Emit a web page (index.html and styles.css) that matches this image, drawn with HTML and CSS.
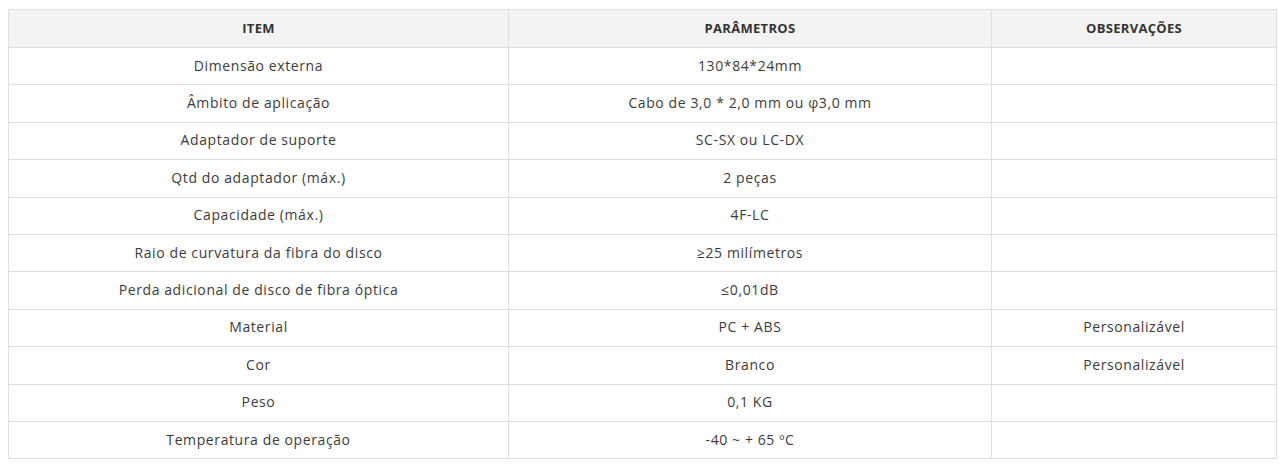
FILE: index.html
```html
<!DOCTYPE html>
<html lang="pt">
<head>
<meta charset="utf-8">
<title>Especificações</title>
<link rel="stylesheet" href="styles.css">
</head>
<body>
<div class="page">
<table class="spec">
  <colgroup>
    <col class="c1"><col class="c2"><col class="c3">
  </colgroup>
  <thead>
    <tr><th>ITEM</th><th>PARÂMETROS</th><th>OBSERVAÇÕES</th></tr>
  </thead>
  <tbody>
    <tr><td>Dimensão externa</td><td>130*84*24mm</td><td></td></tr>
    <tr><td>Âmbito de aplicação</td><td>Cabo de 3,0 * 2,0 mm ou φ3,0 mm</td><td></td></tr>
    <tr><td>Adaptador de suporte</td><td>SC-SX ou LC-DX</td><td></td></tr>
    <tr><td>Qtd do adaptador (máx.)</td><td>2 peças</td><td></td></tr>
    <tr><td>Capacidade (máx.)</td><td>4F-LC</td><td></td></tr>
    <tr><td>Raio de curvatura da fibra do disco</td><td>≥25 milímetros</td><td></td></tr>
    <tr><td>Perda adicional de disco de fibra óptica</td><td>≤0,01dB</td><td></td></tr>
    <tr><td>Material</td><td>PC + ABS</td><td>Personalizável</td></tr>
    <tr><td>Cor</td><td>Branco</td><td>Personalizável</td></tr>
    <tr><td>Peso</td><td>0,1 KG</td><td></td></tr>
    <tr><td>Temperatura de operação</td><td>-40 ~ + 65 ºC</td><td></td></tr>
  </tbody>
</table>
</div>
</body>
</html>
```
FILE: styles.css
```css
html, body {
  margin: 0;
  padding: 0;
  background: #fff;
}
.page {
  padding: 9px 4px 0 8px;
}
.spec {
  width: 1268px;
  border-collapse: collapse;
  table-layout: fixed;
  font-family: "Open Sans", "Liberation Sans", sans-serif;
  font-size: 14px;
  letter-spacing: 0.6px;
  color: #3c3c3c;
}
.c1 { width: 500px; }
.c2 { width: 483px; }
.c3 { width: 285px; }
.spec th, .spec td {
  border: 1px solid #dddddd;
  text-align: center;
  padding: 0 8px 2px;
}
.spec th {
  background: #f3f3f3;
  height: 35px;
  font-size: 13px;
  font-weight: 700;
  letter-spacing: 0.3px;
  color: #333;
}
.spec td {
  height: 34.4px;
}
```
